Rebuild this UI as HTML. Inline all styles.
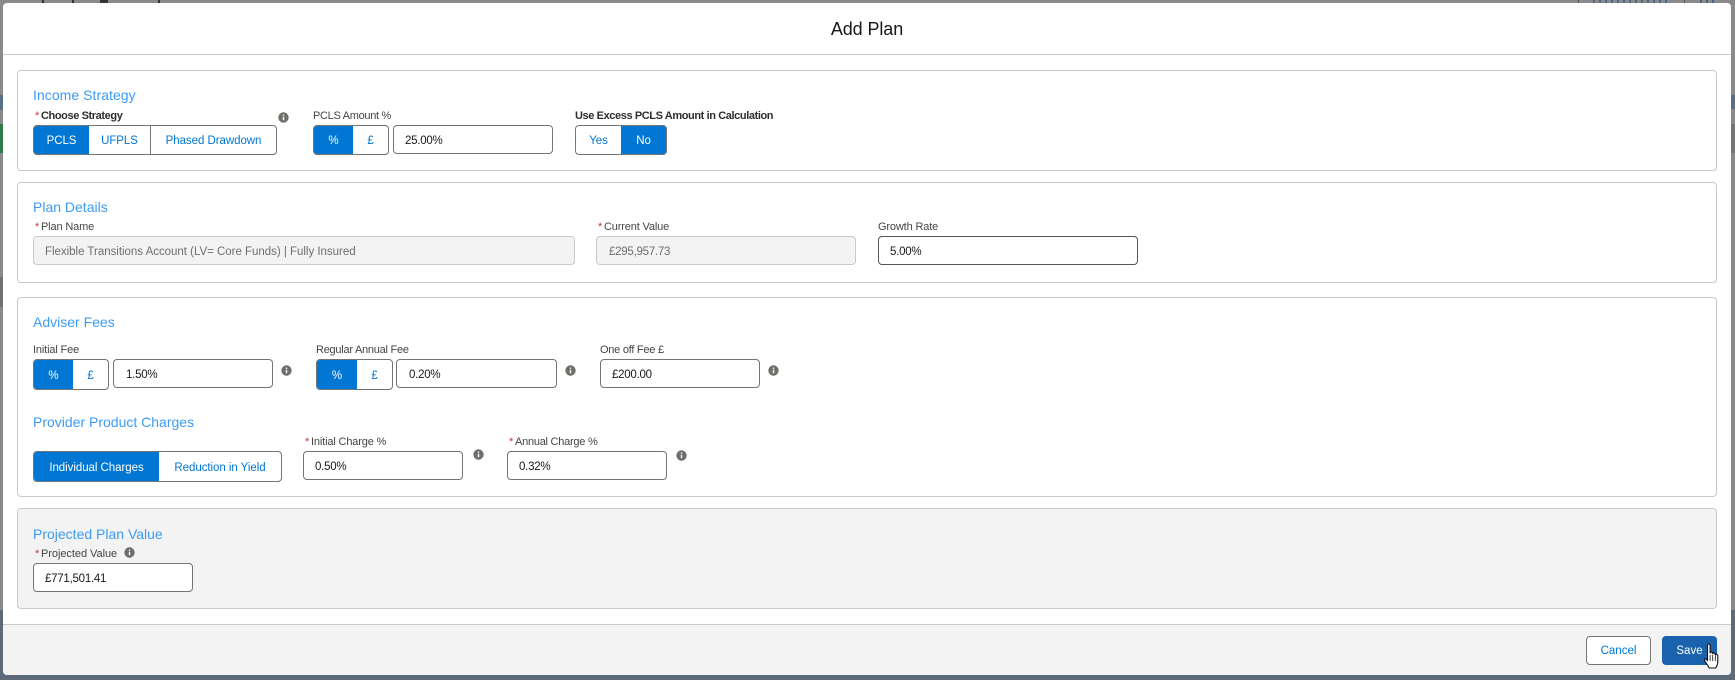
<!DOCTYPE html>
<html lang="en"><head><meta charset="utf-8"><title>Add Plan</title>
<style>
html,body{margin:0;padding:0;width:1735px;height:680px;overflow:hidden;background:#8a8a8a;font-family:"Liberation Sans",sans-serif;color:#181818}
.a{position:absolute;box-sizing:border-box;white-space:nowrap}
.bg{position:absolute}
.modal{left:3px;top:3px;width:1728px;height:672px;background:#fff;border-radius:4px}
.sec{left:17px;width:1700px;border:1px solid #c9c9c9;border-radius:4px;background:#fff}
.t{font-size:14px;color:#3b9bf5;line-height:18px;height:18px}
.l{font-size:11px;color:#444;line-height:14px;height:14px;letter-spacing:-.15px;margin-top:1px}
.b{font-weight:bold;color:#2e2e2e;letter-spacing:-.4px}
.s{font-size:11px;color:#c23934;line-height:14px;height:14px;margin-top:1px}
.i{border:1px solid #747474;border-radius:4px;background:#fff;font-size:11.5px;letter-spacing:-.25px;line-height:30px;color:#181818;height:29px}
.d{background:#f3f3f3;border-color:#c9c9c9;color:#706e6b}
.g{border:1px solid #747474;border-radius:4px;background:#fff;overflow:hidden;height:30px}
.g span{position:absolute;top:0;bottom:0;text-align:center;font-size:11.5px;letter-spacing:-.05px;line-height:30px;color:#0176d3;box-sizing:border-box}
.g .on{background:#0176d3;color:#fff}
.g .sep{border-left:1px solid #747474}
.n{width:11px;height:11px}
</style></head><body>
<svg width="0" height="0" style="position:absolute"><symbol id="info" viewBox="0 0 11 11"><circle cx="5.5" cy="5.5" r="5.2" fill="#706e6b"/><rect x="4.8" y="2.6" width="1.4" height="1.3" fill="#fff"/><rect x="4.8" y="4.8" width="1.4" height="3.4" fill="#fff"/></symbol></svg>

<div class="bg" style="left:0;top:610px;width:1735px;height:70px;background:#5d6a79"></div>
<div class="bg" style="left:0;top:95px;width:3px;height:15px;background:#56708a"></div>
<div class="bg" style="left:0;top:124px;width:3px;height:29px;background:#2f7a46"></div>
<div class="bg" style="left:0;top:277px;width:3px;height:30px;background:#707070"></div>
<div class="bg" style="left:1731px;top:95px;width:4px;height:14px;background:#56708a"></div>
<div class="bg" style="left:1731px;top:124px;width:4px;height:29px;background:#757575"></div>
<div class="bg" style="left:1578px;top:0;width:1px;height:3px;background:#555"></div>
<div class="bg" style="left:1684px;top:0;width:1px;height:3px;background:#555"></div>
<div class="bg" style="left:1593px;top:0;width:76px;height:3px;background:repeating-linear-gradient(90deg,#476683 0 2px,#8a8a8a 2px 6px)"></div>
<div class="bg" style="left:1700px;top:0;width:18px;height:3px;background:repeating-linear-gradient(90deg,#476683 0 2px,#8a8a8a 2px 6px)"></div>
<div class="bg" style="left:38px;top:0;width:122px;height:3px;background:linear-gradient(90deg,#8a8a8a 0 4px,#333 4px 6px,#8a8a8a 6px 34px,#333 34px 36px,#8a8a8a 36px 62px,#333 62px 70px,#8a8a8a 70px 120px,#333 120px 122px)"></div>

<div class="a modal"></div>
<div class="a" style="left:3px;top:54px;width:1728px;height:1px;background:#c9c9c9"></div>
<div class="a" style="left:3px;top:624px;width:1728px;height:51px;background:#f3f3f3;border-top:1px solid #c9c9c9;border-radius:0 0 4px 4px"></div>
<div class="a" style="left:3px;top:19px;width:1728px;text-align:center;font-size:18px;line-height:20px;height:20px;color:#181818;letter-spacing:-.1px">Add Plan</div>

<!-- Income Strategy -->
<div class="a sec" style="top:70px;height:101px"></div>
<div class="a t" style="left:33px;top:86px;letter-spacing:.05px">Income Strategy</div>
<div class="a s" style="left:35px;top:108px">*</div>
<div class="a l b" style="left:41px;top:108px">Choose Strategy</div>
<div class="a g" style="left:33px;top:125px;width:244px">
  <span class="on" style="left:0;width:55px">PCLS</span>
  <span style="left:55px;width:61px">UFPLS</span>
  <span class="sep" style="left:116px;width:126px">Phased Drawdown</span>
</div>
<svg class="a n" style="left:278px;top:112px"><use href="#info"/></svg>
<div class="a l" style="left:313px;top:108px;letter-spacing:-.3px">PCLS Amount %</div>
<div class="a g" style="left:313px;top:125px;width:76px">
  <span class="on" style="left:0;width:39px">%</span>
  <span style="left:39px;width:35px">£</span>
</div>
<div class="a i" style="left:393px;top:125px;width:160px;padding-left:11px">25.00%</div>
<div class="a l b" style="left:575px;top:108px">Use Excess PCLS Amount in Calculation</div>
<div class="a g" style="left:575px;top:125px;width:92px">
  <span style="left:0;width:45px">Yes</span>
  <span class="on" style="left:45px;width:45px">No</span>
</div>

<!-- Plan Details -->
<div class="a sec" style="top:182px;height:101px"></div>
<div class="a t" style="left:33px;top:198px">Plan Details</div>
<div class="a s" style="left:35px;top:219px">*</div>
<div class="a l" style="left:41px;top:219px">Plan Name</div>
<div class="a i d" style="left:33px;top:236px;width:542px;padding-left:11px;font-size:11.5px;letter-spacing:-.02px">Flexible Transitions Account (LV= Core Funds) | Fully Insured</div>
<div class="a s" style="left:598px;top:219px">*</div>
<div class="a l" style="left:604px;top:219px">Current Value</div>
<div class="a i d" style="left:596px;top:236px;width:260px;padding-left:12px">£295,957.73</div>
<div class="a l" style="left:878px;top:219px">Growth Rate</div>
<div class="a i" style="left:878px;top:236px;width:260px;padding-left:11px;border-color:#555">5.00%</div>

<!-- Adviser Fees -->
<div class="a sec" style="top:297px;height:200px"></div>
<div class="a t" style="left:33px;top:313px">Adviser Fees</div>
<div class="a l" style="left:33px;top:342px">Initial Fee</div>
<div class="a g" style="left:33px;top:359px;width:76px;height:31px">
  <span class="on" style="left:0;width:39px;line-height:32px">%</span>
  <span style="left:39px;width:35px;line-height:32px">£</span>
</div>
<div class="a i" style="left:113px;top:359px;width:160px;padding-left:12px;line-height:31px">1.50%</div>
<svg class="a n" style="left:281px;top:365px"><use href="#info"/></svg>
<div class="a l" style="left:316px;top:342px;letter-spacing:-.25px">Regular Annual Fee</div>
<div class="a g" style="left:316px;top:359px;width:77px;height:31px">
  <span class="on" style="left:0;width:40px;line-height:32px">%</span>
  <span style="left:40px;width:35px;line-height:32px">£</span>
</div>
<div class="a i" style="left:396px;top:359px;width:161px;padding-left:12px;line-height:31px">0.20%</div>
<svg class="a n" style="left:565px;top:365px"><use href="#info"/></svg>
<div class="a l" style="left:600px;top:342px;letter-spacing:-.25px">One off Fee £</div>
<div class="a i" style="left:600px;top:359px;width:160px;padding-left:11px;line-height:31px">£200.00</div>
<svg class="a n" style="left:768px;top:365px"><use href="#info"/></svg>

<div class="a t" style="left:33px;top:413px">Provider Product Charges</div>
<div class="a g" style="left:33px;top:451px;width:249px;height:31px">
  <span class="on" style="left:0;width:125px;line-height:33px">Individual Charges</span>
  <span style="left:125px;width:122px;line-height:33px">Reduction in Yield</span>
</div>
<div class="a s" style="left:305px;top:434px">*</div>
<div class="a l" style="left:311px;top:434px">Initial Charge %</div>
<div class="a i" style="left:303px;top:451px;width:160px;padding-left:11px;line-height:31px">0.50%</div>
<svg class="a n" style="left:473px;top:449px"><use href="#info"/></svg>
<div class="a s" style="left:509px;top:434px">*</div>
<div class="a l" style="left:515px;top:434px;letter-spacing:-.25px">Annual Charge %</div>
<div class="a i" style="left:507px;top:451px;width:160px;padding-left:11px;line-height:31px">0.32%</div>
<svg class="a n" style="left:676px;top:450px"><use href="#info"/></svg>

<!-- Projected Plan Value -->
<div class="a sec" style="top:508px;height:101px;background:#f3f3f3"></div>
<div class="a t" style="left:33px;top:525px">Projected Plan Value</div>
<div class="a s" style="left:35px;top:546px">*</div>
<div class="a l" style="left:41px;top:546px;letter-spacing:-.05px">Projected Value</div>
<svg class="a n" style="left:124px;top:547px"><use href="#info"/></svg>
<div class="a i" style="left:33px;top:563px;width:160px;padding-left:11px">£771,501.41</div>

<!-- Footer -->
<div class="a" style="left:1586px;top:636px;width:65px;height:29px;background:#fff;border:1px solid #747474;border-radius:4px;text-align:center;font-size:11.5px;line-height:29px;color:#0176d3">Cancel</div>
<div class="a" style="left:1662px;top:636px;width:55px;height:29px;background:#1b62ae;border-radius:4px;text-align:center;font-size:11.5px;line-height:31px;color:#fff">Save</div>
<svg class="a" style="left:1702px;top:643px" width="20" height="27" viewBox="0 0 20 27"><path d="M5.5 2.2c0-1.6 2.6-1.6 2.6 0V10c0-1 2.6-1.2 2.6.2v.6c.2-1 2.5-1 2.6.5v.7c.3-.9 2.4-.8 2.5.8v6.2c0 2.8-1.2 4-2 6H7.2c-.6-1.6-2.4-3.8-4.6-7.3-.9-1.5.8-2.6 2-1.2l.9 1.1z" fill="#fff" stroke="#111" stroke-width="1.1" stroke-linejoin="round"/><path d="M8.1 12v6M10.7 12v6M13.3 12.5V18" stroke="#111" stroke-width=".8" fill="none"/></svg>
</body></html>
